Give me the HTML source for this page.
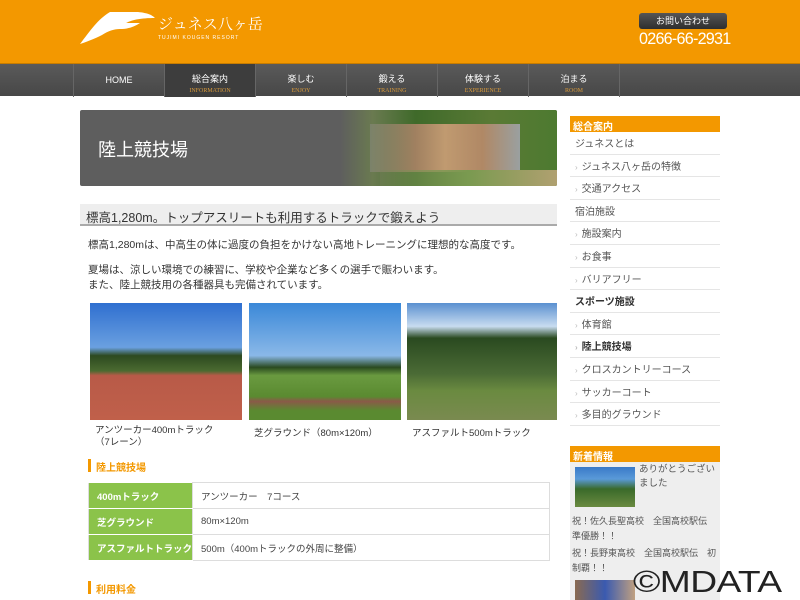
<!DOCTYPE html>
<html><head><meta charset="utf-8"><style>
*{margin:0;padding:0;box-sizing:border-box}
body{width:800px;height:600px;overflow:hidden;background:#fff;font-family:"Liberation Sans","Noto Sans CJK JP",sans-serif;color:#444;position:relative}
.a{position:absolute}
#hd{left:0;top:0;width:800px;height:63px;background:#f39800}
#nav{left:0;top:63px;width:800px;height:33px;background:linear-gradient(#5a5a5a,#474747);border-top:1px solid #c77c00}
.ni{top:0;height:33px;width:91px;border-left:1px solid #666;text-align:center;color:#fff;font-size:9px}
.ni b{display:block;font-weight:normal;margin-top:8px}
.ni i{display:block;font-style:normal;font-size:6px;color:#d99a3a;margin-top:3px;font-family:"Liberation Serif",serif}
.sb{left:570px;width:150px;height:22.6px;border-bottom:1px solid #e5e5e5;font-size:10px;color:#555;padding:3px 0 0 5px}
.sb.c::before{content:"›";color:#bbb;margin-right:4px;font-size:8px}
p.t{font-size:10.5px;color:#333}
td{font-size:9.5px;height:26px;border:1px solid #ddd;padding-left:8px}
td.l{background:#8bc34a;color:#fff;font-weight:bold;width:104px;border-color:#fff #ddd}
</style></head><body>
<div id="hd" class="a">
<svg class="a" style="left:80px;top:11px" width="75" height="34" viewBox="0 0 75 34"><path d="M0 33 C10 20 18 8 30 1 L58 1 C68 2 72 4 75 7 C60 7 52 9 46 12 L60 12 C54 16 48 18 40 18 C34 18 28 20 22 24 C14 28 6 31 0 33Z" fill="#fff"/></svg>
<div class="a" style="left:158px;top:13px;color:#fff;font-size:15px;font-family:'Noto Serif CJK SC',serif">ジュネス八ヶ岳</div>
<div class="a" style="left:158px;top:35px;color:#fff;font-size:5px;letter-spacing:1px">TUJIMI KOUGEN RESORT</div>
<div class="a" style="left:639px;top:13px;width:88px;height:16px;background:linear-gradient(#555,#2e2e2e);border-radius:3px;color:#fff;font-size:9px;text-align:center;line-height:16px">お問い合わせ</div>
<div class="a" style="left:639px;top:29px;color:#fff;font-size:17px;letter-spacing:-.8px;transform:scaleX(.95);transform-origin:left">0266-66-2931</div>
</div>
<div id="nav" class="a">
<div class="a ni" style="left:73px"><b style="margin-top:11px">HOME</b></div>
<div class="a ni" style="left:164px;background:#3d3d3d"><b>総合案内</b><i>INFORMATION</i></div>
<div class="a ni" style="left:255px"><b>楽しむ</b><i>ENJOY</i></div>
<div class="a ni" style="left:346px"><b>鍛える</b><i>TRAINING</i></div>
<div class="a ni" style="left:437px"><b>体験する</b><i>EXPERIENCE</i></div>
<div class="a ni" style="left:528px"><b>泊まる</b><i>ROOM</i></div>
<div class="a" style="left:619px;top:0;width:1px;height:33px;background:#666"></div>
</div>
<div class="a" style="left:80px;top:110px;width:477px;height:76px;background:#5e5e5e;border-radius:2px;overflow:hidden">
<div class="a" style="left:260px;top:0;width:217px;height:76px;background:linear-gradient(90deg,#5e5e5e,#6a7a50 15%,#3f6a2a 35%,#5a7a35 70%,#4d7a30)"></div>
<div class="a" style="left:290px;top:14px;width:150px;height:48px;background:linear-gradient(90deg,rgba(140,140,130,.5),#a08060 30%,#c09a70 50%,#b08865 75%,#9aa0a0)"></div>
<div class="a" style="left:300px;top:60px;width:177px;height:16px;background:linear-gradient(90deg,rgba(120,130,90,.3),#7a9a50,#b0a070)"></div>
<div class="a" style="left:18px;top:26px;color:#fff;font-size:18px">陸上競技場</div>
</div>
<div class="a" style="left:80px;top:204px;width:477px;height:22px;background:#eee;border-bottom:2px solid #aaa;font-size:12.5px;color:#333;padding:3px 0 0 6px">標高1,280m。トップアスリートも利用するトラックで鍛えよう</div>
<p class="a t" style="left:88px;top:237px">標高1,280mは、中高生の体に過度の負担をかけない高地トレーニングに理想的な高度です。</p>
<p class="a t" style="left:88px;top:263px;line-height:15px">夏場は、涼しい環境での練習に、学校や企業など多くの選手で賑わいます。<br>また、陸上競技用の各種器具も完備されています。</p>
<div class="a" style="left:90px;top:303px;width:152px;height:117px;background:linear-gradient(#2f6fd0,#6aa0e0 38%,#2d4a20 45%,#4a6a30 58%,#b85a48 62%,#c0604a 100%)"></div>
<div class="a" style="left:249px;top:303px;width:152px;height:117px;background:linear-gradient(#3a88d8,#8ab8e8 45%,#2a4a20 55%,#6a9a40 62%,#5a8a30 80%,#8a5a48 84%,#5a8a30 92%)"></div>
<div class="a" style="left:407px;top:303px;width:150px;height:117px;background:linear-gradient(#5a90d0,#c8dcf0 20%,#2a4a20 30%,#4a6a35 60%,#6a8a40 75%,#7a8a50)"></div>
<p class="a t" style="left:95px;top:425px;font-size:9.5px;line-height:12px">アンツーカー400mトラック<br>（7レーン）</p>
<p class="a t" style="left:254px;top:425px;font-size:9.5px">芝グラウンド（80m×120m）</p>
<p class="a t" style="left:412px;top:425px;font-size:9.5px">アスファルト500mトラック</p>
<div class="a" style="left:88px;top:459px;width:3px;height:13px;background:#f39800"></div>
<div class="a" style="left:96px;top:459px;font-size:10px;font-weight:bold;color:#f39800">陸上競技場</div>
<table class="a" style="left:88px;top:482px;width:462px;border-collapse:collapse">
<tr><td class="l">400mトラック</td><td>アンツーカー　7コース</td></tr>
<tr><td class="l">芝グラウンド</td><td>80m×120m</td></tr>
<tr><td class="l">アスファルトトラック</td><td>500m（400mトラックの外周に整備）</td></tr>
</table>
<div class="a" style="left:88px;top:581px;width:3px;height:13px;background:#f39800"></div>
<div class="a" style="left:96px;top:581px;font-size:10px;font-weight:bold;color:#f39800">利用料金</div>
<div class="a" style="left:570px;top:116px;width:150px;height:16px;background:#f39800;color:#fff;font-size:10px;font-weight:bold;padding:2px 0 0 3px">総合案内</div>
<div class="a sb" style="top:132px">ジュネスとは</div>
<div class="a sb c" style="top:154.6px">ジュネス八ヶ岳の特徴</div>
<div class="a sb c" style="top:177.2px">交通アクセス</div>
<div class="a sb" style="top:199.8px">宿泊施設</div>
<div class="a sb c" style="top:222.4px">施設案内</div>
<div class="a sb c" style="top:245px">お食事</div>
<div class="a sb c" style="top:267.6px">バリアフリー</div>
<div class="a sb" style="top:290.2px;font-weight:bold;color:#333">スポーツ施設</div>
<div class="a sb c" style="top:312.8px">体育館</div>
<div class="a sb c" style="top:335.4px;font-weight:bold;color:#333">陸上競技場</div>
<div class="a sb c" style="top:358px">クロスカントリーコース</div>
<div class="a sb c" style="top:380.6px">サッカーコート</div>
<div class="a sb c" style="top:403.2px">多目的グラウンド</div>
<div class="a" style="left:570px;top:446px;width:150px;height:16px;background:#f39800;color:#fff;font-size:10px;font-weight:bold;padding:2px 0 0 3px">新着情報</div>
<div class="a" style="left:570px;top:462px;width:150px;height:138px;background:#eee"></div>
<div class="a" style="left:575px;top:467px;width:60px;height:40px;background:linear-gradient(#3a7ac8,#5a9ad8 30%,#3a6a2a 55%,#6a8a40)"></div>
<div class="a" style="left:639px;top:463px;font-size:9.5px;color:#555;line-height:14px;width:80px">ありがとうございました</div>
<div class="a" style="left:572px;top:514px;font-size:9px;color:#555;line-height:15px;width:136px">祝！佐久長聖高校　全国高校駅伝準優勝！！</div>
<div class="a" style="left:572px;top:546px;font-size:9px;color:#555;line-height:15px;width:146px">祝！長野東高校　全国高校駅伝　初制覇！！</div>
<div class="a" style="left:575px;top:580px;width:60px;height:20px;background:linear-gradient(90deg,#8a6a50,#3a5ab0,#c0a080)"></div>
<div class="a" style="left:633px;top:564px;font-size:31px;color:#222;letter-spacing:-.5px;transform:scaleX(1.2);transform-origin:left">©MDATA</div>
</body></html>
